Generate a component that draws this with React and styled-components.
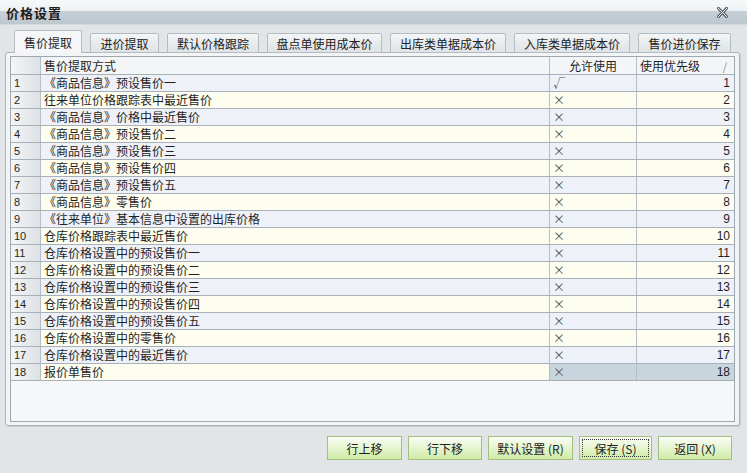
import styled, { createGlobalStyle } from "styled-components";

const GlobalStyle = createGlobalStyle`
  html, body {
    margin: 0;
    padding: 0;
    background: #e2e5e8;
  }
  body {
    font-family: "Liberation Sans", "Noto Sans CJK SC", sans-serif;
    font-size: 12px;
    color: #1a1a1a;
  }
`;

const Window = styled.div`
  width: 747px;
  height: 473px;
  display: flex;
  flex-direction: column;
  background: #e2e5e8;
  overflow: hidden;
`;

const TitleBar = styled.div`
  height: 25px;
  display: flex;
  align-items: center;
  justify-content: space-between;
  padding: 0 19px 0 6px;
  background: linear-gradient(#f6f8f9 0, #eef1f3 44%, #c5cfd5 48%, #bdc8ce 100%);
  border-bottom: 1px solid #d2d8dc;
  box-sizing: border-box;
`;

const Title = styled.div`
  font-family: "Noto Sans CJK SC", sans-serif;
  font-weight: bold;
  font-size: 13px;
  color: #1c1c1c;
  letter-spacing: 1px;
`;

const Close = styled.div`
  display: flex;
  width: 11px;
  height: 11px;
`;

const Body = styled.div`
  flex: 1;
  display: flex;
  flex-direction: column;
  padding: 5px 6px 0 5px;
`;

const TabRow = styled.div`
  display: flex;
  align-items: flex-end;
  gap: 8px;
  padding-left: 9px;
  height: 23px;
  position: relative;
  z-index: 1;
  margin-bottom: -1px;
`;

const Tab = styled.div`
  width: ${(p) => p.$w}px;
  height: ${(p) => (p.$active ? "23px" : "20px")};
  box-sizing: border-box;
  display: flex;
  align-items: center;
  justify-content: center;
  font-family: "Noto Sans CJK SC", sans-serif;
  font-size: 12px;
  color: #222;
  border: 1px solid #b3bcc3;
  border-bottom: ${(p) => (p.$active ? "none" : "1px solid #b3bcc3")};
  border-radius: 2px 2px 0 0;
  background: ${(p) =>
    p.$active ? "#f4f6f8" : "linear-gradient(#f3f5f6, #dfe3e6)"};
  white-space: nowrap;
`;

const Panel = styled.div`
  height: 374px;
  box-sizing: border-box;
  border: 1px solid #a9b2b9;
  border-radius: 3px;
  background: #f2f4f6;
  padding: 3px 4px 3px 4px;
  margin-right: 1px;
  box-shadow: 1px 1px 0 #c8cdd1;
`;

const Grid = styled.div`
  height: 100%;
  box-sizing: border-box;
  border: 1px solid #9ea8b0;
  background: #f6f7f9;
`;

const Row = styled.div`
  display: grid;
  grid-template-columns: 29px 509px 87px 1fr;
  height: ${(p) => (p.$head ? 18 : 17)}px;
  box-sizing: border-box;
  border-bottom: 1px solid #a8b1b9;
  background: ${(p) => (p.$head ? "#f4f5f6" : p.$odd ? "#eef2f8" : "#fdfdf0")};
`;

const Cell = styled.div`
  display: flex;
  align-items: center;
  justify-content: ${(p) =>
    p.$align === "right" ? "flex-end" : p.$align === "center" ? "center" : "flex-start"};
  padding: 0 ${(p) => (p.$align === "right" ? 4 : 3)}px 0 3px;
  border-left: ${(p) => (p.$first ? "none" : "1px solid #b7bfc6")};
  font-family: ${(p) =>
    p.$num ? '"Liberation Sans", sans-serif' : '"Noto Sans CJK SC", sans-serif'};
  font-size: 12px;
  line-height: 16px;
  color: #1f1f1f;
  white-space: nowrap;
  overflow: hidden;
  background: ${(p) => (p.$sel ? "#c9d5dd" : "transparent")};
`;

const IndexCell = styled(Cell)`
  background: linear-gradient(90deg, #f4f5f6, #dde1e5);
  font-family: "Liberation Sans", sans-serif;
  font-size: 11px;
`;

const SortMark = styled.span`
  margin-left: auto;
  margin-right: 4px;
  color: #8a939a;
  font-size: 11px;
`;

const Mark = styled.span`
  color: #555;
  font-size: 12px;
  font-family: "Noto Sans CJK SC", sans-serif;
`;

const ButtonBar = styled.div`
  display: flex;
  justify-content: flex-end;
  gap: 6px;
  padding: 10px 9px 0 0;
`;

const Button = styled.div`
  width: ${(p) => p.$w}px;
  height: 24px;
  box-sizing: border-box;
  display: flex;
  align-items: center;
  justify-content: center;
  border: 1px solid #a4c07f;
  background: linear-gradient(#fafdf5 0, #e8f6d3 45%, #cfeaa6 100%);
  font-family: "Noto Sans CJK SC", sans-serif;
  font-size: 12px;
  color: #222;
  position: relative;
  &::after {
    content: "";
    display: ${(p) => (p.$focus ? "block" : "none")};
    position: absolute;
    inset: 2px;
    border: 1px dotted #333;
  }
`;

const tabs = [
  ["售价提取", 68],
  ["进价提取", 69],
  ["默认价格跟踪", 92],
  ["盘点单使用成本价", 115],
  ["出库类单据成本价", 116],
  ["入库类单据成本价", 116],
  ["售价进价保存", 93],
];

const rows = [
  ["《商品信息》预设售价一", true],
  ["往来单位价格跟踪表中最近售价"],
  ["《商品信息》价格中最近售价"],
  ["《商品信息》预设售价二"],
  ["《商品信息》预设售价三"],
  ["《商品信息》预设售价四"],
  ["《商品信息》预设售价五"],
  ["《商品信息》零售价"],
  ["《往来单位》基本信息中设置的出库价格"],
  ["仓库价格跟踪表中最近售价"],
  ["仓库价格设置中的预设售价一"],
  ["仓库价格设置中的预设售价二"],
  ["仓库价格设置中的预设售价三"],
  ["仓库价格设置中的预设售价四"],
  ["仓库价格设置中的预设售价五"],
  ["仓库价格设置中的零售价"],
  ["仓库价格设置中的最近售价"],
  ["报价单售价"],
];

const buttons = [
  ["行上移", 75],
  ["行下移", 74],
  ["默认设置 (R)", 85],
  ["保存 (S)", 73, true],
  ["返回 (X)", 74],
];

const App = () => {
  return (
    <Window>
      <GlobalStyle />
      <TitleBar>
        <Title>价格设置</Title>
        <Close>
          <svg width="11" height="11" viewBox="0 0 11 11">
            <path
              d="M1 1 L10 10 M10 1 L1 10"
              stroke="#5a6268"
              strokeWidth="3"
              strokeLinecap="square"
            />
            <path
              d="M1 1 L10 10 M10 1 L1 10"
              stroke="#eef1f3"
              strokeWidth="1"
              strokeLinecap="square"
            />
          </svg>
        </Close>
      </TitleBar>
      <Body>
        <TabRow>
          {tabs.map(([t, w], i) => (
            <Tab key={t} $active={i === 0} $w={w}>
              {t}
            </Tab>
          ))}
        </TabRow>
        <Panel>
          <Grid>
            <Row $head>
              <IndexCell $first />
              <Cell>售价提取方式</Cell>
              <Cell $align="center">允许使用</Cell>
              <Cell>
                使用优先级<SortMark>/</SortMark>
              </Cell>
            </Row>
            {rows.map(([name, ok], i) => {
              const sel = i === rows.length - 1;
              return (
                <Row key={i} $odd={i % 2 === 0}>
                  <IndexCell $first>{i + 1}</IndexCell>
                  <Cell>{name}</Cell>
                  <Cell $sel={sel}>
                    <Mark>{ok ? "√" : "×"}</Mark>
                  </Cell>
                  <Cell $align="right" $num $sel={sel}>
                    {i + 1}
                  </Cell>
                </Row>
              );
            })}
          </Grid>
        </Panel>
        <ButtonBar>
          {buttons.map(([label, w, focus]) => (
            <Button key={label} $w={w} $focus={focus}>
              {label}
            </Button>
          ))}
        </ButtonBar>
      </Body>
    </Window>
  );
};

export default App;
